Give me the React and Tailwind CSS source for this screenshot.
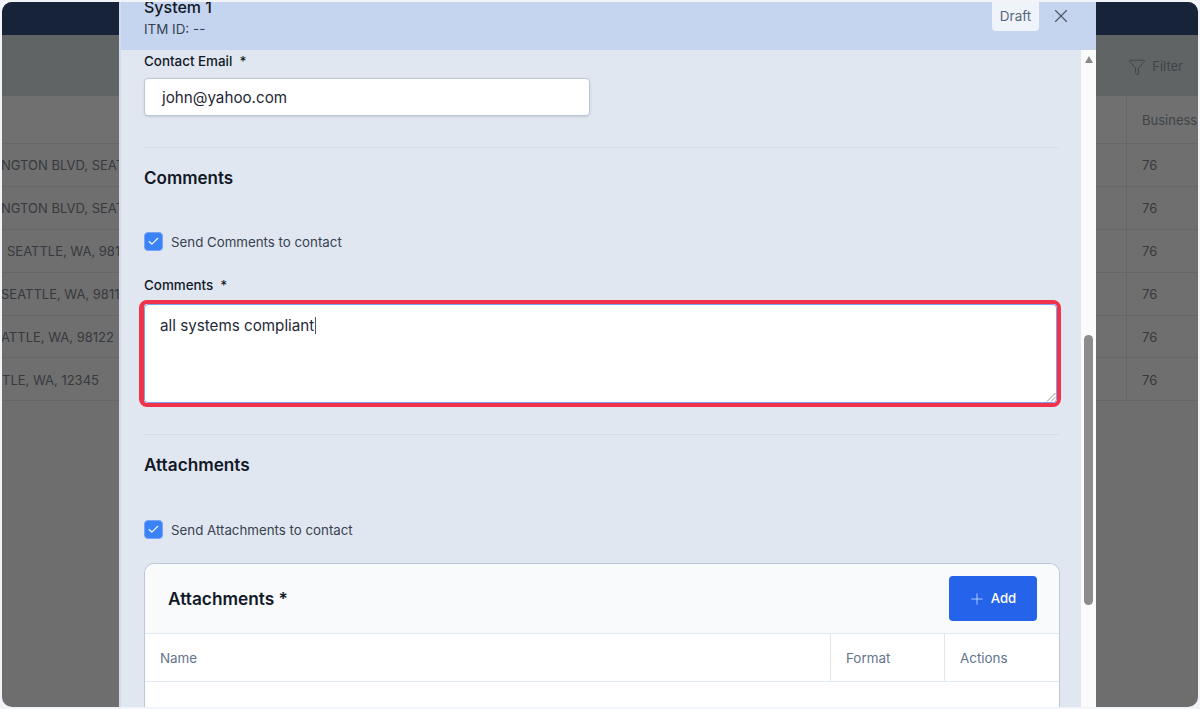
import { Check, Filter, Plus, X } from 'lucide-react';

const rows = [
  { text: 'NGTON BLVD, SEAT', shift: '-ml-[1px]' },
  { text: 'NGTON BLVD, SEAT', shift: '-ml-[1px]' },
  { text: 'SEATTLE, WA, 981', shift: 'ml-[5px]' },
  { text: 'SEATTLE, WA, 9811', shift: '-ml-[1px]' },
  { text: 'ATTLE, WA, 98122', shift: '-ml-[1px]' },
  { text: 'TLE, WA, 12345', shift: 'ml-0' },
];

function Backdrop() {
  return (
    <div className="flex h-full flex-col bg-[#6e6e6e] text-[13px] text-[#36393e]">
      <div className="h-[33px] shrink-0 bg-[#172338]" />
      <div className="flex h-[61px] shrink-0 items-center justify-end gap-[6px] bg-[#606465] pr-[15px] pt-[2px] text-[#3f4449]">
        <Filter size={18} strokeWidth={1.25} />
        <span>Filter</span>
      </div>
      <div className="flex h-[48px] shrink-0 border-b border-[#666666] bg-[#707070]">
        <div className="w-[1125px] shrink-0 border-r border-[#666666]" />
        <div className="flex items-center whitespace-nowrap pl-[15px] pt-[3px] text-[#3f4449]">Business</div>
      </div>
      {rows.map((row, i) => (
        <div key={i} className="flex h-[42.9px] shrink-0 border-b border-[#666666] bg-[#6f6f6f]">
          <div className="flex w-[1125px] shrink-0 items-center border-r border-[#666666] pt-[2px]">
            <div className="w-[117px] overflow-hidden whitespace-nowrap">
              <div className={row.shift}>{row.text}</div>
            </div>
          </div>
          <div className="flex items-center pl-[15px] pt-[2px]">76</div>
        </div>
      ))}
    </div>
  );
}

function CheckRow({ label }) {
  return (
    <div className="flex items-center gap-[8px]">
      <span className="flex h-[19px] w-[19px] items-center justify-center rounded-[4px] border border-[#76a5f7] bg-[#3b82f6] text-white">
        <Check size={13} strokeWidth={2} />
      </span>
      <span className="translate-y-px text-[13.3px] leading-[19px] text-[#374151]">{label}</span>
    </div>
  );
}

function FieldLabel({ children }) {
  return (
    <div className="text-[13.4px] font-medium leading-[16px] text-[#111827]">
      {children}
      <span className="ml-[7px]">*</span>
    </div>
  );
}

function AttachmentsCard() {
  return (
    <div className="-mr-px mt-[24px] overflow-hidden rounded-t-[10px] border border-b-0 border-[#bcc7da] bg-white">
      <div className="flex h-[70px] items-center justify-between border-b border-[#e2e8f0] bg-[#f8fafc] pl-[23px] pr-[22px]">
        <h3 className="text-[17.3px] font-semibold leading-[22px] text-[#111827]">Attachments *</h3>
        <button className="flex h-[45px] w-[88px] items-center justify-center gap-[5px] rounded-[4px] bg-[#2563eb] pr-[2px] text-[13.2px] font-medium text-white">
          <Plus size={18} strokeWidth={1.25} className="text-[#b9cffa]" />
          Add
        </button>
      </div>
      <div className="flex h-[48px] border-b border-[#e2e8f0] pt-[2px] text-[13.4px] text-[#64748b]">
        <div className="-mt-[2px] flex w-[686px] items-center border-r border-[#e2e8f0] pl-[15px] pt-[2px]">Name</div>
        <div className="-mt-[2px] flex w-[114px] items-center border-r border-[#e2e8f0] pl-[15px] pt-[2px]">Format</div>
        <div className="flex items-center pl-[15px]">Actions</div>
      </div>
      <div className="h-[60px]" />
    </div>
  );
}

function Modal() {
  return (
    <div className="absolute bottom-0 left-[117px] top-0 flex w-[977px] flex-col border-l-2 border-[#d3dcec] bg-[#e1e7f0] font-['Inter',sans-serif]">
      <div className="flex h-[48px] shrink-0 justify-between overflow-hidden bg-[#c5d5ef] pl-[23px] pr-[24px]">
        <div className="flex flex-col justify-end pb-[12px]">
          <div className="text-[16px] font-medium leading-[20px] text-[#111827]">System 1</div>
          <div className="mt-[3px] text-[13.4px] leading-[18px] text-[#374151]">ITM ID: --</div>
        </div>
        <div className="flex items-start gap-[11px]">
          <span className="flex h-[29px] w-[47px] items-center justify-center rounded-b-[4px] bg-[#eff3fa] text-[13.5px] text-[#5b6678]">
            Draft
          </span>
          <X size={22} strokeWidth={1.25} className="mt-[3px] text-[#4b5563]" />
        </div>
      </div>

      <div className="flex min-h-0 flex-1">
        <div className="min-w-0 flex-1 overflow-hidden pl-[23px] pr-[22px] pt-[3px]">
          <FieldLabel>Contact Email</FieldLabel>
          <div className="mt-[9px] flex h-[38px] w-[446px] items-center rounded-[4px] border border-[#bcc7dc] bg-white pl-[17px] pt-[2px] text-[15.2px] text-[#1f2937] shadow-sm">
            john@yahoo.com
          </div>
          <div className="mt-[31px] h-px bg-[#d6dde8]" />
          <h3 className="mt-[19px] text-[17px] font-semibold leading-[22px] text-[#111827]">Comments</h3>
          <div className="mt-[43px]">
            <CheckRow label="Send Comments to contact" />
          </div>
          <div className="mt-[26px]">
            <FieldLabel>Comments</FieldLabel>
          </div>
          <div className="-ml-[5px] -mr-[2px] mt-[7px] h-[107px] rounded-[8px] border-[4px] border-l-[5px] border-[#f0334a] bg-white">
            <div className="relative h-full rounded-[4px] border border-[#7aa5ee] pl-[15px] pt-[9px] text-[15.2px] leading-[20px] text-[#1f2937]">
              all systems compliant
              <span className="ml-px inline-block h-[17px] w-px translate-y-[3px] bg-[#4b5563]" />
              <svg className="absolute bottom-0 right-0 h-[10px] w-[10px] text-[#777777]" viewBox="0 0 10 10" fill="none" stroke="currentColor" strokeWidth="0.8">
                <path d="M1 9.5 9.5 1M5 9.5 9.5 5" />
              </svg>
            </div>
          </div>
          <div className="mt-[27px] h-px bg-[#d6dde8]" />
          <h3 className="mt-[19px] text-[17.2px] font-semibold leading-[22px] text-[#111827]">Attachments</h3>
          <div className="mt-[44px]">
            <CheckRow label="Send Attachments to contact" />
          </div>
          <AttachmentsCard />
        </div>

        <div className="flex w-[15px] shrink-0 flex-col items-center bg-[#fbfbfb] pt-[6px]">
          <span className="h-0 w-0 border-x-[4.5px] border-b-[7px] border-x-transparent border-b-[#8a8a8a]" />
          <div className="mt-[272px] h-[270px] w-[9px] rounded-full bg-[#8c8c8c]" />
        </div>
      </div>
    </div>
  );
}

export default function App() {
  return (
    <div className="h-[709px] w-[1200px] overflow-hidden bg-[#f2f4fa] p-[2px] font-['Inter',sans-serif]">
      <div className="relative h-full w-full overflow-hidden rounded-[10px]">
        <Backdrop />
        <Modal />
      </div>
    </div>
  );
}
